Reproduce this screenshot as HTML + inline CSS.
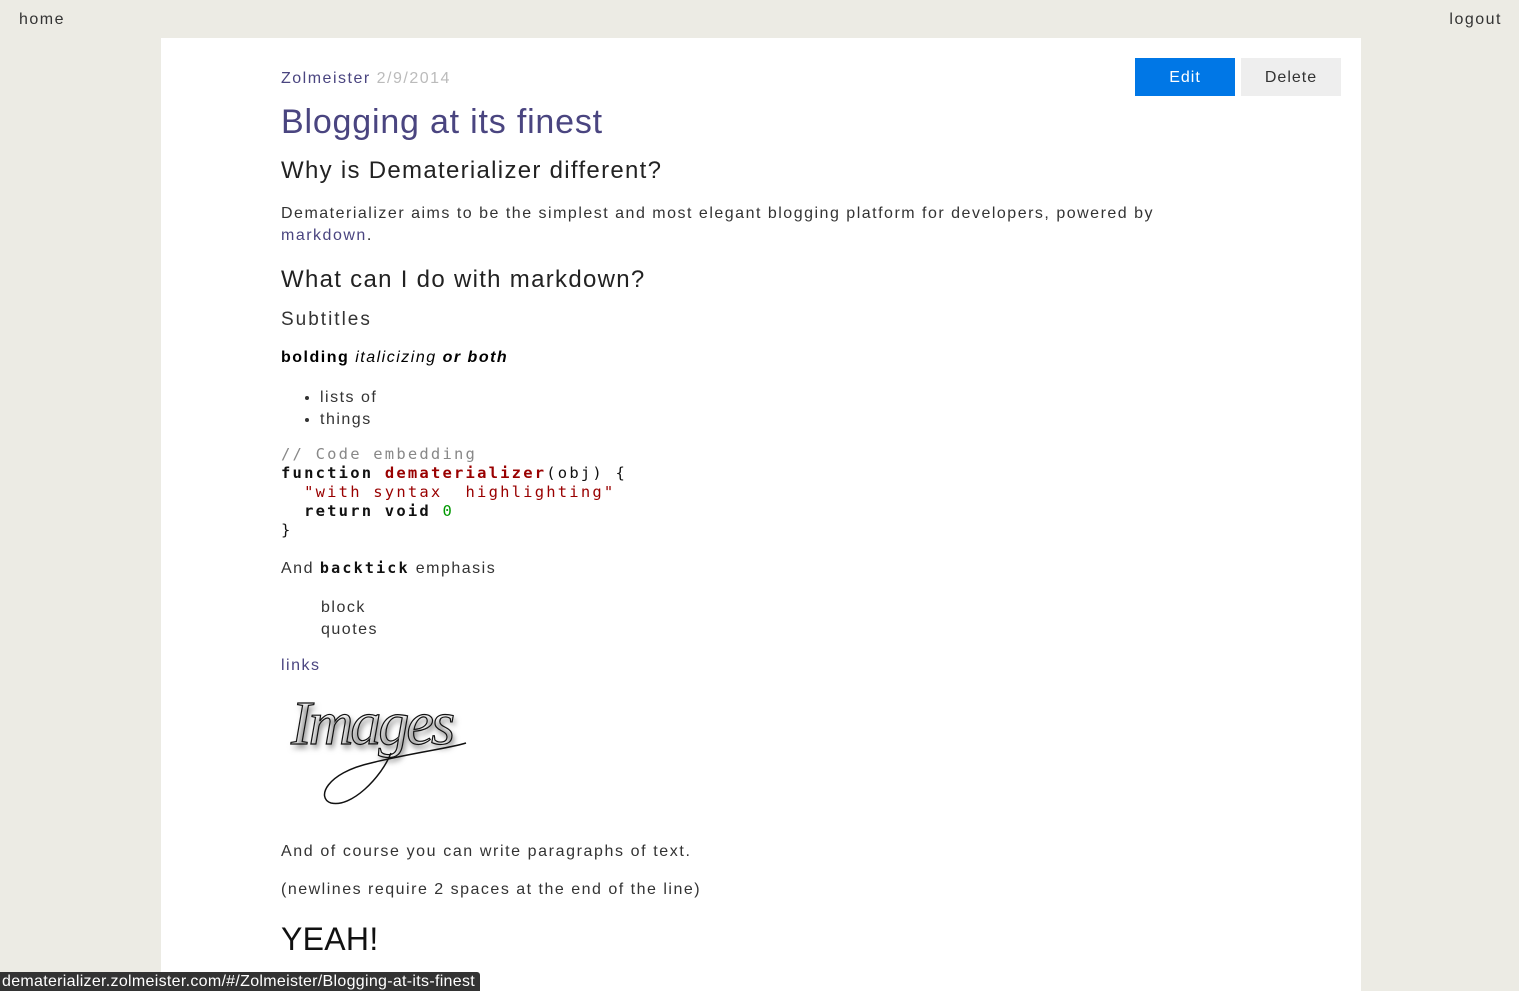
<!DOCTYPE html>
<html><head><meta charset="utf-8"><style>
html,body{margin:0;height:991px;overflow:hidden}
body{background:#ecebe4;width:1519px;font-family:"Liberation Sans",sans-serif;color:#222;letter-spacing:1.5px;position:relative}
.top{position:absolute;top:11px;font-size:16px;color:#333}
.card{position:absolute;left:161px;top:38px;width:1200px;height:953px;background:#fff}
.c{position:absolute;left:120px;top:0;width:960px}
.abs{position:absolute;white-space:nowrap}
a{color:#4a4580;text-decoration:none}
.btn{position:absolute;top:20px;height:38px;width:100px;font-size:16px;line-height:39px;text-align:center;letter-spacing:1px}
.mono{font-family:"DejaVu Sans Mono","Liberation Mono",monospace}
</style></head><body>
<div class="top" style="left:19px">home</div>
<div class="top" style="right:17px">logout</div>
<div class="card">
<div class="btn" style="left:974px;background:#0077e6;color:#fff">Edit</div>
<div class="btn" style="left:1080px;background:#eee;color:#333">Delete</div>
<div class="c">
<div class="abs" style="top:32px;font-size:16px"><a>Zolmeister</a> <span style="color:#bbb">2/9/2014</span></div>
<div class="abs" style="top:65px;font-size:34px;color:#4a4580;letter-spacing:0.8px">Blogging at its finest</div>
<div class="abs" style="top:119px;font-size:24px;letter-spacing:1.3px">Why is Dematerializer different?</div>
<div class="abs" style="top:167px;font-size:16px;color:#333;letter-spacing:1.5px">Dematerializer aims to be the simplest and most elegant blogging platform for developers, powered by</div>
<div class="abs" style="top:189px;font-size:16px"><a>markdown</a>.</div>
<div class="abs" style="top:228px;font-size:24px;letter-spacing:1.3px">What can I do with markdown?</div>
<div class="abs" style="top:271px;font-size:19px;color:#333;letter-spacing:2px">Subtitles</div>
<div class="abs" style="top:311px;font-size:16px;color:#000"><b>bolding</b> <i>italicizing</i> <b><i>or both</i></b></div>
<ul class="abs" style="top:349px;margin:0;padding-left:40px;font-size:16px;line-height:22px;color:#333;left:-1px"><li>lists of</li><li>things</li></ul>
<pre class="abs mono" style="white-space:pre;top:407px;margin:0;font-size:15.5px;line-height:19px;color:#111;letter-spacing:2.2px"><span style="color:#888">// Code embedding</span>
<b>function</b> <b style="color:#900">dematerializer</b>(obj) {
  <span style="color:#900">"with syntax  highlighting"</span>
  <b>return void</b> <span style="color:#090">0</span>
}</pre>
<div class="abs" style="top:521px;font-size:16px;color:#333">And <b class="mono" style="font-size:15px;letter-spacing:2.2px;color:#111">backtick</b> emphasis</div>
<div class="abs" style="top:559px;left:40px;font-size:16px;line-height:22px;color:#333">block<br>quotes</div>
<div class="abs" style="top:619px;font-size:16px"><a>links</a></div>
<svg class="abs" style="top:640px;left:0" width="200" height="135"><defs><filter id="s"><feGaussianBlur stdDeviation="3"/></filter></defs>
<text x="12" y="70" font-family="Liberation Serif" font-style="italic" font-size="62" fill="#888" filter="url(#s)" letter-spacing="-3">Images</text>
<text x="10" y="66" font-family="Liberation Serif" font-style="italic" font-size="62" fill="none" stroke="#111" stroke-width="1.2" letter-spacing="-3">Images</text>
<path d="M110 75 C100 100 70 130 50 125 C35 120 45 95 90 85 C130 75 170 70 185 65" fill="none" stroke="#111" stroke-width="1.5"/></svg>
<div class="abs" style="top:805px;font-size:16px;color:#333;letter-spacing:1.6px">And of course you can write paragraphs of text.</div>
<div class="abs" style="top:843px;font-size:16px;color:#333;letter-spacing:1.5px">(newlines require 2 spaces at the end of the line)</div>
<div class="abs" style="top:883px;font-size:32px;color:#111;letter-spacing:0.3px">YEAH!</div>
</div></div>
<div style="position:absolute;left:0;top:972px;height:19px;padding:0 5px 0 2px;background:#333;color:#fff;font-size:16px;line-height:19px;letter-spacing:0.3px;border-top-right-radius:3px">dematerializer.zolmeister.com/#/Zolmeister/Blogging-at-its-finest</div>
</body></html>
